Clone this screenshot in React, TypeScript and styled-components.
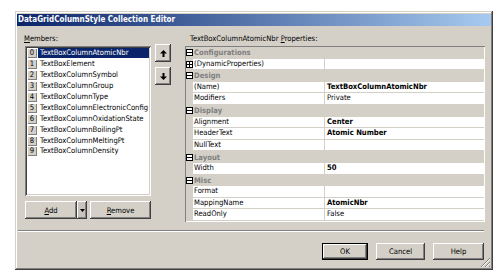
import React from 'react';
import styled, { createGlobalStyle, css } from 'styled-components';

const Global = createGlobalStyle`
  html, body { margin: 0; padding: 0; background: #ffffff; }
  body { font-family: "DejaVu Sans Condensed", "Liberation Sans", Arial, sans-serif; font-size: 7.6px; color: #000; }
  * { box-sizing: border-box; }
`;

const FACE = '#d4d0c8';

const Page = styled.div`
  padding: 11px 0 0 15px;
`;

const Window = styled.div`
  position: relative;
  width: 478px;
  height: 259px;
  background: ${FACE};
  padding: 3px 2px 2px 2px;
  box-shadow: inset -1px -1px #404040, inset 1px 1px ${FACE}, inset -2px -2px #808080, inset 2px 2px #ffffff;
  display: flex;
  flex-direction: column;
`;

const TitleBar = styled.div`
  height: 12px;
  line-height: 12px;
  padding-left: 1px;
  background: linear-gradient(to right, #0a246a, #a6caf0);
  color: #ffffff;
  font-weight: bold;
  font-size: 8px;
  white-space: nowrap;
`;

const TopRow = styled.div`
  display: flex;
  align-items: flex-start;
  padding: 7px 0 0 8px;
`;

const LeftPanel = styled.div`
  width: 126px;
  display: flex;
  flex-direction: column;
`;

const Label = styled.div<{ $indent?: number }>`
  height: 13px;
  line-height: 11px;
  padding-left: ${(p) => p.$indent ?? 0}px;
  white-space: nowrap;
`;

const ListBox = styled.div`
  height: 150px;
  background: #ffffff;
  padding: 2px 2px;
  box-shadow: inset 1px 1px #808080, inset -1px -1px #ffffff, inset 2px 2px #404040, inset -2px -2px ${FACE};
`;

const ListRow = styled.div`
  display: flex;
  align-items: center;
  height: 10.9px;
`;

const IndexCell = styled.div`
  width: 10px;
  height: 10px;
  flex-shrink: 0;
  line-height: 9.5px;
  text-align: center;
  background: ${FACE};
  box-shadow: inset 1px 1px #ffffff, inset -1px -1px #808080;
`;

const ItemName = styled.div<{ $selected?: boolean }>`
  flex: 1;
  min-width: 0;
  height: 10px;
  line-height: 10px;
  margin-left: 1px;
  padding-left: 2px;
  white-space: nowrap;
  overflow: hidden;
  ${(p) =>
    p.$selected &&
    css`
      background: #0a246a;
      color: #ffffff;
    `}
`;

const raised = css`
  background: ${FACE};
  box-shadow: inset -1px -1px #404040, inset 1px 1px #ffffff, inset -2px -2px #808080;
`;

const ButtonRow = styled.div`
  display: flex;
  margin-top: 5px;
  height: 18px;
`;

const Btn = styled.div<{ $w: number; $default?: boolean }>`
  ${raised}
  width: ${(p) => p.$w}px;
  height: 100%;
  display: flex;
  align-items: center;
  justify-content: center;
  ${(p) =>
    p.$default &&
    css`
      box-shadow: inset 0 0 0 1px #000, inset -2px -2px #404040, inset 2px 2px #ffffff, inset -3px -3px #808080;
    `}
`;

const DropPart = styled.div`
  width: 10px;
  height: 100%;
  background: #c8c4bc;
  box-shadow: inset -1px -1px #404040, inset 1px 1px #ffffff, inset -2px -2px #808080;
  display: flex;
  align-items: center;
  justify-content: center;
  margin-right: 3px;
`;

const ArrowColumn = styled.div`
  display: flex;
  flex-direction: column;
  gap: 5px;
  margin: 11px 0 0 4px;
`;

const ArrowBtn = styled.div`
  ${raised}
  width: 16px;
  height: 18px;
  display: flex;
  align-items: center;
  justify-content: center;
`;

const RightPanel = styled.div`
  width: 300px;
  margin-left: 14px;
  display: flex;
  flex-direction: column;
`;

const Grid = styled.div`
  height: 176px;
  padding: 1px;
  background: ${FACE};
  box-shadow: inset 1px 1px #808080, inset -1px -1px #ffffff;
  display: flex;
  flex-direction: column;
`;

const CategoryRow = styled.div`
  display: flex;
  align-items: center;
  height: 11.6px;
  background: ${FACE};
  color: #808080;
  font-weight: bold;
  white-space: nowrap;
`;

const MarginCell = styled.div`
  width: 7px;
  height: 100%;
  display: flex;
  align-items: center;
  justify-content: center;
  flex-shrink: 0;
`;

const ToggleBox = styled.div`
  width: 7px;
  height: 7px;
  border: 1px solid #000;
  background: #ffffff;
  position: relative;
`;

const CatText = styled.span`
  padding-left: 1px;
`;

const PropRow = styled.div`
  display: grid;
  grid-template-columns: 7px 131px 1fr;
  height: 11.6px;
`;

const Cell = styled.div<{ $value?: boolean; $bold?: boolean }>`
  background: #ffffff;
  border-bottom: 1px solid ${FACE};
  ${(p) => p.$value && css`border-left: 1px solid ${FACE};`}
  padding-left: ${(p) => (p.$value ? 2 : 1)}px;
  line-height: 10.6px;
  white-space: nowrap;
  overflow: hidden;
  font-weight: ${(p) => (p.$bold ? 'bold' : 'normal')};
`;

const Separator = styled.div`
  width: 466px;
  margin: 8px 0 0 1px;
  border-top: 1px solid #808080;
  border-bottom: 1px solid #ffffff;
`;

const BottomRow = styled.div`
  display: flex;
  justify-content: flex-end;
  gap: 8px;
  margin-top: 11px;
  padding-right: 7px;
  height: 17px;
`;

const Grip = styled.svg`
  position: absolute;
  right: 2px;
  bottom: 2px;
`;

const UpArrow = () => (
  <svg width="7" height="7" viewBox="0 0 7 7">
    <path d="M3.5 0 L7 3.5 L4.5 3.5 L4.5 7 L2.5 7 L2.5 3.5 L0 3.5 Z" fill="#000" />
  </svg>
);

const DownArrow = () => (
  <svg width="7" height="7" viewBox="0 0 7 7">
    <path d="M3.5 7 L7 3.5 L4.5 3.5 L4.5 0 L2.5 0 L2.5 3.5 L0 3.5 Z" fill="#000" />
  </svg>
);

const Caret = () => (
  <svg width="5" height="3" viewBox="0 0 5 3">
    <path d="M0 0 L5 0 L2.5 3 Z" fill="#000" />
  </svg>
);

const Toggle = ({ open }: { open: boolean }) => (
  <ToggleBox>
    <svg width="5" height="5" viewBox="0 0 5 5" style={{ position: 'absolute', left: 0, top: 0 }}>
      <rect x="0" y="2" width="5" height="1" fill="#000" />
      {!open && <rect x="2" y="0" width="1" height="5" fill="#000" />}
    </svg>
  </ToggleBox>
);

const members = [
  'TextBoxColumnAtomicNbr',
  'TextBoxElement',
  'TextBoxColumnSymbol',
  'TextBoxColumnGroup',
  'TextBoxColumnType',
  'TextBoxColumnElectronicConfig',
  'TextBoxColumnOxidationState',
  'TextBoxColumnBoilingPt',
  'TextBoxColumnMeltingPt',
  'TextBoxColumnDensity',
];

type Row =
  | { kind: 'cat'; name: string }
  | { kind: 'prop'; name: string; value: string; bold?: boolean; expand?: boolean };

const rows: Row[] = [
  { kind: 'cat', name: 'Configurations' },
  { kind: 'prop', name: '(DynamicProperties)', value: '', expand: true },
  { kind: 'cat', name: 'Design' },
  { kind: 'prop', name: '(Name)', value: 'TextBoxColumnAtomicNbr', bold: true },
  { kind: 'prop', name: 'Modifiers', value: 'Private' },
  { kind: 'cat', name: 'Display' },
  { kind: 'prop', name: 'Alignment', value: 'Center', bold: true },
  { kind: 'prop', name: 'HeaderText', value: 'Atomic Number', bold: true },
  { kind: 'prop', name: 'NullText', value: '' },
  { kind: 'cat', name: 'Layout' },
  { kind: 'prop', name: 'Width', value: '50', bold: true },
  { kind: 'cat', name: 'Misc' },
  { kind: 'prop', name: 'Format', value: '' },
  { kind: 'prop', name: 'MappingName', value: 'AtomicNbr', bold: true },
  { kind: 'prop', name: 'ReadOnly', value: 'False' },
];

export default function App() {
  return (
    <Page>
      <Global />
      <Window>
        <TitleBar>DataGridColumnStyle Collection Editor</TitleBar>
        <TopRow>
          <LeftPanel>
            <Label style={{ marginLeft: -1 }}>
              <u>M</u>embers:
            </Label>
            <ListBox>
              {members.map((m, i) => (
                <ListRow key={m}>
                  <IndexCell>{i}</IndexCell>
                  <ItemName $selected={i === 0}>{m}</ItemName>
                </ListRow>
              ))}
            </ListBox>
            <ButtonRow>
              <Btn $w={52}>
                <span>
                  <u>A</u>dd
                </span>
              </Btn>
              <DropPart>
                <Caret />
              </DropPart>
              <Btn $w={61}>
                <span>
                  <u>R</u>emove
                </span>
              </Btn>
            </ButtonRow>
          </LeftPanel>
          <ArrowColumn>
            <ArrowBtn>
              <UpArrow />
            </ArrowBtn>
            <ArrowBtn>
              <DownArrow />
            </ArrowBtn>
          </ArrowColumn>
          <RightPanel>
            <Label $indent={5}>
              TextBoxColumnAtomicNbr <u>P</u>roperties:
            </Label>
            <Grid>
              {rows.map((r, i) =>
                r.kind === 'cat' ? (
                  <CategoryRow key={i}>
                    <MarginCell>
                      <Toggle open />
                    </MarginCell>
                    <CatText>{r.name}</CatText>
                  </CategoryRow>
                ) : (
                  <PropRow key={i}>
                    <MarginCell>{r.expand && <Toggle open={false} />}</MarginCell>
                    <Cell>{r.name}</Cell>
                    <Cell $value $bold={r.bold}>
                      {r.value}
                    </Cell>
                  </PropRow>
                )
              )}
            </Grid>
          </RightPanel>
        </TopRow>
        <Separator />
        <BottomRow>
          <Btn $w={46} $default>
            OK
          </Btn>
          <Btn $w={49}>Cancel</Btn>
          <Btn $w={51}>Help</Btn>
        </BottomRow>
        <Grip width="11" height="11" viewBox="0 0 11 11">
          <path d="M10 1 L1 10 M10 5 L5 10 M10 9 L9 10" stroke="#808080" strokeWidth="1" />
          <path d="M10 2 L2 10 M10 6 L6 10" stroke="#ffffff" strokeWidth="1" />
        </Grip>
      </Window>
    </Page>
  );
}
